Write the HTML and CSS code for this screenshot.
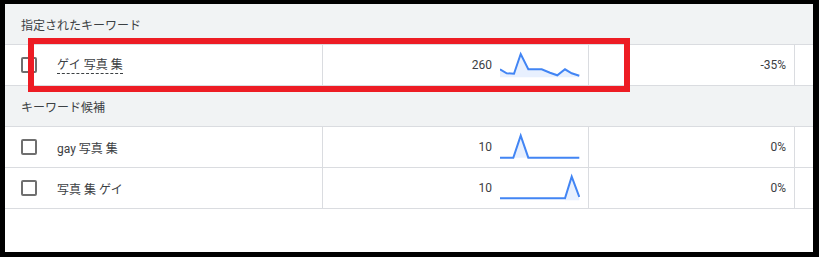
FILE: index.html
```html
<!DOCTYPE html>
<html lang="ja">
<head>
    <meta charset="UTF-8">
    <meta name="viewport" content="width=device-width, initial-scale=1.0">
    <title>キーワード</title>
    <link rel="stylesheet" href="styles.css">
</head>
<body>

<div class="frame">
    <div class="group-header">指定されたキーワード</div>
    <div class="kw-row">
        <div class="cell cell-keyword">
            <span class="checkbox"></span>
            <span class="kw-text kw-underline">ゲイ 写真 集</span>
        </div>
        <div class="cell cell-volume">
            <span class="num">260</span>
            <svg class="spark" width="80" height="40" viewBox="0 0 80 40">
                <polygon class="spark-fill" points="0,24.3 6.7,28.3 14,28.7 20.7,9 28.3,24.3 35,24.3 41.7,24.3 50,27.7 57.3,30.3 65,24.3 71.7,28.3 79.3,30.7 79.3,32.3 0,32.3"/>
                <polyline class="spark-line" points="0,24.3 6.7,28.3 14,28.7 20.7,9 28.3,24.3 35,24.3 41.7,24.3 50,27.7 57.3,30.3 65,24.3 71.7,28.3 79.3,30.7"/>
            </svg>
        </div>
        <div class="cell cell-change">-35%</div>
        <div class="cell cell-rest"></div>
    </div>

    <div class="group-header">キーワード候補</div>
    <div class="kw-row">
        <div class="cell cell-keyword">
            <span class="checkbox"></span>
            <span class="kw-text">gay 写真 集</span>
        </div>
        <div class="cell cell-volume">
            <span class="num">10</span>
            <svg class="spark" width="80" height="40" viewBox="0 0 80 40">
                <polygon class="spark-fill" points="13.3,30.7 20.7,8.7 28.3,30.7"/>
                <polyline class="spark-line" points="0,30.7 13.3,30.7 20.7,8.7 28.3,30.7 79.3,30.7"/>
            </svg>
        </div>
        <div class="cell cell-change">0%</div>
        <div class="cell cell-rest"></div>
    </div>
    <div class="kw-row">
        <div class="cell cell-keyword">
            <span class="checkbox"></span>
            <span class="kw-text">写真 集 ゲイ</span>
        </div>
        <div class="cell cell-volume">
            <span class="num">10</span>
            <svg class="spark" width="80" height="40" viewBox="0 0 80 40">
                <polygon class="spark-fill" points="65,30.3 71.7,8.7 79.3,30.3 79.3,32.3 65,32.3"/>
                <polyline class="spark-line" points="0,30.3 65,30.3 71.7,8.7 79.3,29"/>
            </svg>
        </div>
        <div class="cell cell-change">0%</div>
        <div class="cell cell-rest"></div>
    </div>

    <div class="highlight"></div>
</div>

</body>
</html>
```

FILE: styles.css
```css
body {
    margin: 0;
    background-color: #000;
    font-family: Roboto, "Noto Sans CJK JP", sans-serif;
    font-size: 12px;
    color: #3c4043;
}

.frame {
    position: relative;
    margin: 4px 6px 5px 5px;
    height: 248px;
    background-color: #fff;
}

.group-header {
    height: 40px;
    display: flex;
    align-items: center;
    padding-left: 16px;
    background-color: #f1f3f4;
    border-bottom: 1px solid #dadce0;
}

.kw-row {
    display: grid;
    grid-template-columns: 318px 266px 206px 1fr;
    height: 41px;
    box-sizing: border-box;
    border-bottom: 1px solid #dadce0;
}

.cell {
    display: flex;
    align-items: center;
    border-right: 1px solid #dadce0;
    box-sizing: border-box;
}

.cell-rest {
    border-right: none;
}

.cell-keyword {
    padding-left: 16px;
}

.checkbox {
    width: 16px;
    height: 16px;
    box-sizing: border-box;
    border: 2px solid #6f6f6f;
    border-radius: 2px;
    margin-right: 20px;
}

.kw-underline {
    border-bottom: 1px dashed #3c4043;
    line-height: 14px;
    padding-bottom: 1px;
    margin-top: 2px;
}

.cell-volume {
    justify-content: flex-end;
    padding-right: 8px;
    gap: 8px;
}

.spark {
    display: block;
}

.spark-line {
    fill: none;
    stroke: #4285f4;
    stroke-width: 2;
    stroke-linejoin: miter;
}

.spark-fill {
    fill: #e8f0fe;
}

.cell-change {
    justify-content: flex-end;
    padding-right: 8px;
}

.highlight {
    position: absolute;
    left: 23px;
    top: 34px;
    width: 602px;
    height: 54px;
    box-sizing: border-box;
    border: 6px solid #ed1c24;
}
```
